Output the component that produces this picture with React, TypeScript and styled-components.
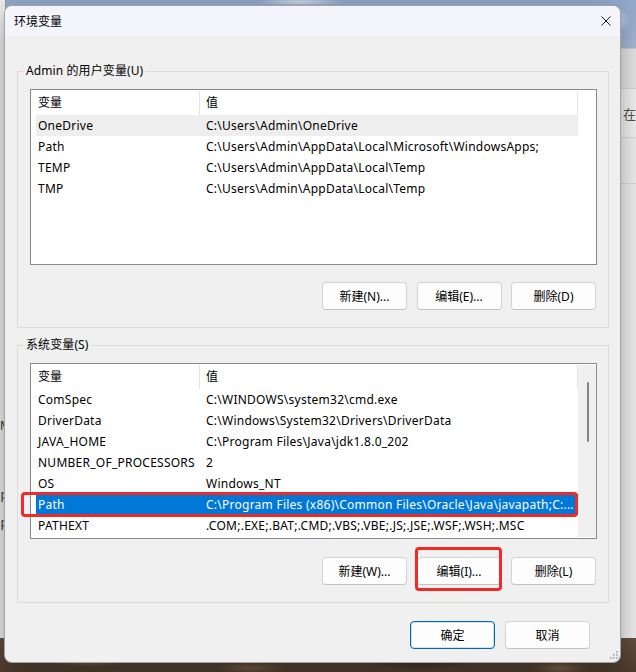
import React from "react";
import styled, { createGlobalStyle, css } from "styled-components";

const UI_FONT = `"Segoe UI", "Noto Sans", "Noto Sans CJK SC", sans-serif`;

const GlobalStyle = createGlobalStyle`
  html, body { margin: 0; padding: 0; }
  body {
    font-family: ${UI_FONT};
    font-size: 12px;
    color: #000;
    background: #4f3d2f;
  }
  * { box-sizing: border-box; }
`;

const Desktop = styled.div`
  position: relative;
  width: 636px;
  height: 672px;
  overflow: hidden;
  background:
    radial-gradient(ellipse 60px 10px at 90px 660px, rgba(170, 140, 100, 0.55), transparent 70%),
    radial-gradient(ellipse 50px 8px at 250px 668px, rgba(150, 120, 85, 0.5), transparent 70%),
    radial-gradient(ellipse 70px 9px at 420px 664px, rgba(60, 40, 28, 0.6), transparent 70%),
    radial-gradient(ellipse 40px 10px at 560px 668px, rgba(160, 128, 92, 0.5), transparent 70%),
    radial-gradient(ellipse 30px 20px at 610px 20px, rgba(230, 236, 245, 0.8), transparent 70%),
    radial-gradient(ellipse 60px 6px at 300px 2px, rgba(225, 232, 242, 0.8), transparent 70%),
    linear-gradient(180deg, #90a9cc 0px, #a9bdd8 50px, #9ba7b4 300px, #6a5442 632px, #4e3c2e 672px);
`;

/* background windows that sit behind the dialog */
const BackWindowLeft = styled.div`
  position: absolute;
  left: -220px;
  top: 0;
  width: 226px;
  height: 638px;
  background: #eeeeee;
  border-right: 1px solid #9a9a9a;
  display: flex;
  flex-direction: column;
  align-items: flex-end;
  padding-top: 334px;
  gap: 13px;
  overflow: hidden;
`;

const BackFragment = styled.span<{ $color?: string }>`
  font-size: 12px;
  line-height: 15px;
  color: ${(p) => p.$color || "#333"};
  margin-right: -6px;
  white-space: nowrap;
`;

const BackWindowRight = styled.div`
  position: absolute;
  left: 618px;
  top: 48px;
  width: 60px;
  height: 590px;
  background: #f0f0f0;
  border-top: 1px solid #d0d0d0;
  display: flex;
  flex-direction: column;
`;

const BackBand = styled.div<{ $h: number; $bg: string }>`
  height: ${(p) => p.$h}px;
  background: ${(p) => p.$bg};
  border-bottom: 1px solid #dadada;
  display: flex;
  align-items: center;
  padding-left: 5px;
  font-size: 13px;
  color: #555;
`;

const Dialog = styled.div`
  position: absolute;
  left: 4px;
  top: 5px;
  width: 617px;
  height: 658px;
  background: #f0f0f0;
  border: 1px solid rgba(0, 0, 0, 0.32);
  border-radius: 8px;
  overflow: hidden;
  box-shadow: 0 8px 28px rgba(0, 0, 0, 0.35);
  display: flex;
  flex-direction: column;
  z-index: 2;
`;

const TitleBar = styled.div`
  height: 30px;
  flex: none;
  display: flex;
  align-items: center;
  justify-content: space-between;
  padding-left: 9px;
  padding-right: 9px;
  background: #f3f5fa;
`;

const TitleText = styled.span`
  font-size: 12px;
  line-height: 16px;
  font-family: "Noto Sans CJK SC", sans-serif;
`;

const CloseIcon = styled.svg`
  width: 10px;
  height: 10px;
  display: block;
`;

const Body = styled.div`
  flex: 1;
  display: flex;
  flex-direction: column;
  padding: 27px 11px 0 12px;
`;

const Group = styled.fieldset<{ $gapTop?: number }>`
  margin: ${(p) => p.$gapTop ?? 0}px 0 0 0;
  min-width: 0;
  border: 1px solid #dcdcdc;
  padding: 10px 11px 17px 12px;
`;

const GroupLabel = styled.legend`
  font-size: 12px;
  line-height: 16px;
  padding: 0 2px;
  margin-left: -6px;
  letter-spacing: 0.1px;
`;

const ListBox = styled.div`
  height: 176px;
  border: 1px solid #868a91;
  background: #fff;
  display: flex;
  overflow: hidden;
`;

const ListContent = styled.div`
  flex: 1;
  min-width: 0;
  padding-left: 5px;
  display: flex;
  flex-direction: column;
`;

const HeaderRow = styled.div`
  height: 25px;
  flex: none;
  display: grid;
  grid-template-columns: 164px 1fr;
  padding-top: 1px;
`;

const HeaderCell = styled.div<{ $first?: boolean }>`
  border-right: 1px solid #e5e5e5;
  padding-left: ${(p) => (p.$first ? 2 : 6)}px;
  line-height: 23px;
  font-size: 12px;
  white-space: nowrap;
`;

const Row = styled.div<{ $state?: "hover" | "selected" }>`
  height: 21px;
  flex: none;
  display: grid;
  grid-template-columns: 164px 1fr;
  line-height: 21px;
  letter-spacing: 0.25px;
  ${(p) =>
    p.$state === "hover" &&
    css`
      background: #eeeeee;
    `}
  ${(p) =>
    p.$state === "selected" &&
    css`
      background: #0078d7;
      color: #fff;
    `}
`;

const Cell = styled.div<{ $first?: boolean }>`
  padding-left: ${(p) => (p.$first ? 2 : 6)}px;
  white-space: nowrap;
  overflow: hidden;
`;

const ScrollArea = styled.div<{ $track?: boolean }>`
  width: 18px;
  flex: none;
  margin: 1px 0 1px;
  background: ${(p) => (p.$track ? "#f0f0f0" : "#fff")};
  display: flex;
  justify-content: center;
  padding-top: 17px;
`;

const ScrollThumb = styled.div`
  width: 2px;
  height: 60px;
  margin-left: 1px;
  border-radius: 1px;
  background: #858585;
`;

const ButtonRow = styled.div<{ $mt: number }>`
  margin-top: ${(p) => p.$mt}px;
  display: flex;
  justify-content: flex-end;
  gap: 9.5px;
  padding-right: 1px;
`;

const Button = styled.button<{ $primary?: boolean }>`
  width: 85px;
  height: 28px;
  padding: 0;
  font-family: ${UI_FONT};
  font-size: 12px;
  color: #000;
  background: #fdfdfd;
  border: 1px solid #d3d3d3;
  border-bottom-color: #c2c2c2;
  border-radius: 4px;
  ${(p) =>
    p.$primary &&
    css`
      border: 1px solid #0067c0;
      box-shadow: inset 0 0 0 0.5px rgba(0, 103, 192, 0.35);
    `}
`;

const Footer = styled.div`
  margin-top: 18px;
  display: flex;
  justify-content: flex-end;
  gap: 10px;
  padding-right: 19px;
`;

const ResizeGrip = styled.svg`
  position: absolute;
  right: 2px;
  bottom: 3px;
  width: 8px;
  height: 8px;
`;

const Annotation = styled.div<{ $x: number; $y: number; $w: number; $h: number }>`
  position: absolute;
  left: ${(p) => p.$x}px;
  top: ${(p) => p.$y}px;
  width: ${(p) => p.$w}px;
  height: ${(p) => p.$h}px;
  border: 3px solid #f02b27;
  border-radius: 4px;
  z-index: 5;
  pointer-events: none;
`;

type Variable = { name: string; value: string; state?: "hover" | "selected" };

const userVars: Variable[] = [
  { name: "OneDrive", value: "C:\\Users\\Admin\\OneDrive", state: "hover" },
  { name: "Path", value: "C:\\Users\\Admin\\AppData\\Local\\Microsoft\\WindowsApps;" },
  { name: "TEMP", value: "C:\\Users\\Admin\\AppData\\Local\\Temp" },
  { name: "TMP", value: "C:\\Users\\Admin\\AppData\\Local\\Temp" },
];

const systemVars: Variable[] = [
  { name: "ComSpec", value: "C:\\WINDOWS\\system32\\cmd.exe" },
  { name: "DriverData", value: "C:\\Windows\\System32\\Drivers\\DriverData" },
  { name: "JAVA_HOME", value: "C:\\Program Files\\Java\\jdk1.8.0_202" },
  { name: "NUMBER_OF_PROCESSORS", value: "2" },
  { name: "OS", value: "Windows_NT" },
  {
    name: "Path",
    value: "C:\\Program Files (x86)\\Common Files\\Oracle\\Java\\javapath;C:...",
    state: "selected",
  },
  { name: "PATHEXT", value: ".COM;.EXE;.BAT;.CMD;.VBS;.VBE;.JS;.JSE;.WSF;.WSH;.MSC" },
];

function VarList({ rows, scroll }: { rows: Variable[]; scroll?: boolean }) {
  return (
    <ListBox>
      <ListContent>
        <HeaderRow>
          <HeaderCell $first>变量</HeaderCell>
          <HeaderCell>值</HeaderCell>
        </HeaderRow>
        {rows.map((r) => (
          <Row key={r.name} $state={r.state}>
            <Cell $first>{r.name}</Cell>
            <Cell>{r.value}</Cell>
          </Row>
        ))}
      </ListContent>
      <ScrollArea $track={scroll}>{scroll && <ScrollThumb />}</ScrollArea>
    </ListBox>
  );
}

export default function App() {
  return (
    <Desktop>
      <GlobalStyle />
      <BackWindowLeft>
        <BackFragment $color="#1f3b6e">0</BackFragment>
        <BackFragment>s</BackFragment>
        <BackFragment>E</BackFragment>
        <BackFragment>M</BackFragment>
        <BackFragment $color="#2a6fd0">,</BackFragment>
        <BackFragment $color="#555">{" "}</BackFragment>
        <BackFragment>p,</BackFragment>
        <BackFragment>p,</BackFragment>
      </BackWindowLeft>
      <BackWindowRight>
        <BackBand $h={40} $bg="#e7e7e7" />
        <BackBand $h={49} $bg="#f3f3f3">在</BackBand>
        <BackBand $h={46} $bg="#f0f0f0" />
      </BackWindowRight>

      <Dialog>
        <TitleBar>
          <TitleText>环境变量</TitleText>
          <CloseIcon viewBox="0 0 10 10">
            <path d="M0.5 0.5 L9.5 9.5 M9.5 0.5 L0.5 9.5" stroke="#1a1a1a" strokeWidth="1" fill="none" />
          </CloseIcon>
        </TitleBar>
        <Body>
          <Group>
            <GroupLabel>Admin 的用户变量(U)</GroupLabel>
            <VarList rows={userVars} />
            <ButtonRow $mt={17}>
              <Button>新建(N)...</Button>
              <Button>编辑(E)...</Button>
              <Button>删除(D)</Button>
            </ButtonRow>
          </Group>
          <Group $gapTop={9}>
            <GroupLabel>系统变量(S)</GroupLabel>
            <VarList rows={systemVars} scroll />
            <ButtonRow $mt={18}>
              <Button>新建(W)...</Button>
              <Button>编辑(I)...</Button>
              <Button>删除(L)</Button>
            </ButtonRow>
          </Group>
          <Footer>
            <Button $primary>确定</Button>
            <Button>取消</Button>
          </Footer>
        </Body>
        <ResizeGrip viewBox="0 0 8 8">
          <rect x="6" y="0" width="1.6" height="1.6" fill="#a3a3a3" />
          <rect x="3" y="3" width="1.6" height="1.6" fill="#a3a3a3" />
          <rect x="6" y="3" width="1.6" height="1.6" fill="#a3a3a3" />
          <rect x="0" y="6" width="1.6" height="1.6" fill="#a3a3a3" />
          <rect x="3" y="6" width="1.6" height="1.6" fill="#a3a3a3" />
          <rect x="6" y="6" width="1.6" height="1.6" fill="#a3a3a3" />
        </ResizeGrip>
      </Dialog>

      <Annotation $x={21} $y={492} $w={557} $h={25} />
      <Annotation $x={415} $y={547} $w={87} $h={44} />
    </Desktop>
  );
}
